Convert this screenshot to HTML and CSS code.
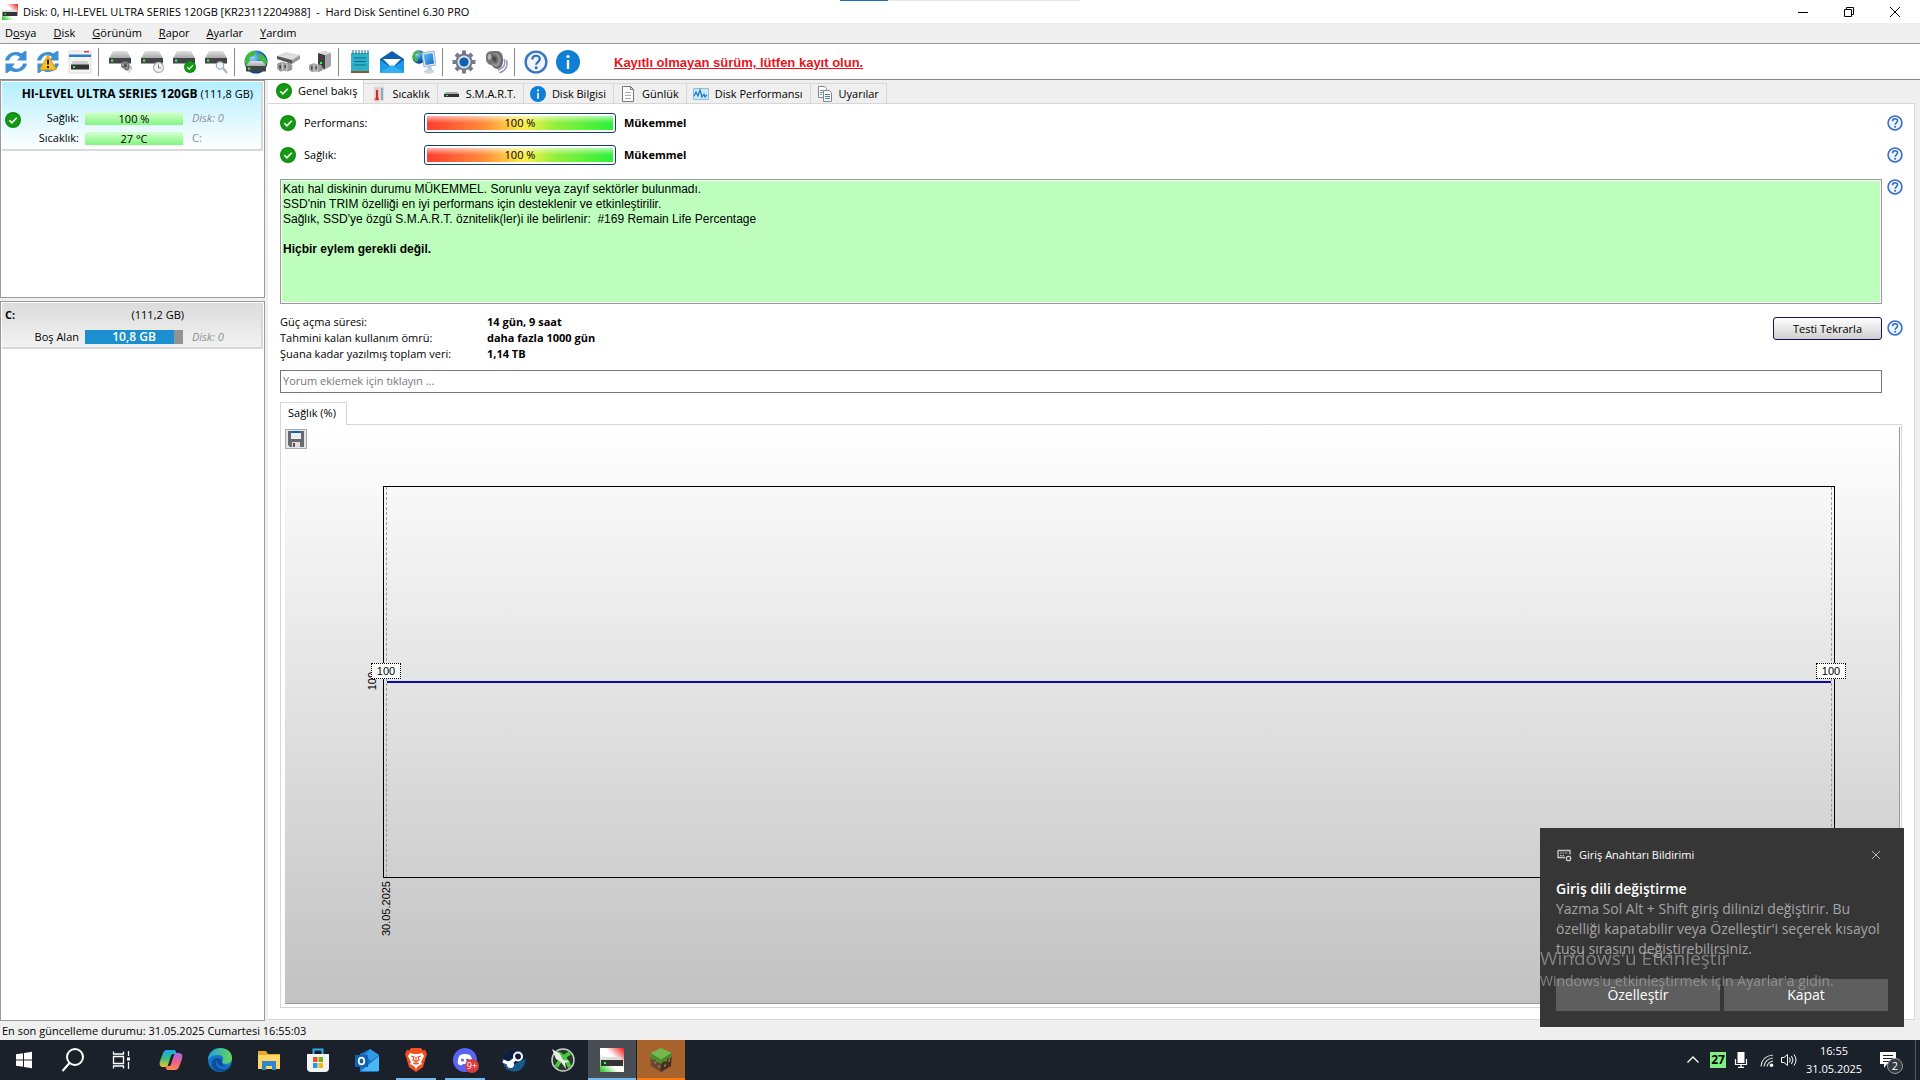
FILE: index.html
```html
<!DOCTYPE html>
<html lang="tr">
  <head>
    <meta charset="utf-8">
    <title>Hard Disk Sentinel 6.30 PRO</title>
    <link rel="stylesheet" href="styles.css">
  </head>
  <body>
    <svg class="defs" aria-hidden="true">
      <defs>
        <linearGradient id="gray" x1="0" y1="0" x2="0" y2="1"><stop offset="0" stop-color="#e2e2e2"/><stop offset="1" stop-color="#a9a9a9"/></linearGradient>
        <linearGradient id="blue" x1="0" y1="0" x2="1" y2="1"><stop offset="0" stop-color="#5cc8f5"/><stop offset="1" stop-color="#1464c8"/></linearGradient>
        <radialGradient id="globe" cx=".35" cy=".3" r=".8"><stop offset="0" stop-color="#9ad8ff"/><stop offset=".5" stop-color="#1b6fd0"/><stop offset="1" stop-color="#062a78"/></radialGradient>
        <radialGradient id="cone" cx=".4" cy=".4" r=".7"><stop offset="0" stop-color="#333"/><stop offset=".6" stop-color="#999"/><stop offset="1" stop-color="#444"/></radialGradient>
        <linearGradient id="logo" x1="0" y1="1" x2="1" y2="0"><stop offset="0" stop-color="#18c818"/><stop offset=".4" stop-color="#fff"/><stop offset=".6" stop-color="#fff"/><stop offset="1" stop-color="#f01818"/></linearGradient>
      </defs>
      <symbol id="i-ok" viewBox="0 0 16 16"><circle cx="8" cy="8" r="8" fill="#0b8a0b"/><circle cx="8" cy="8" r="6.8" fill="#129a12"/><path d="M4.3 8.2l2.6 2.6 4.9-5" fill="none" stroke="#fff" stroke-width="1.6"/></symbol>
      <symbol id="i-help" viewBox="0 0 24 24"><circle cx="12" cy="12" r="10.4" fill="#eef5ff" stroke="#3a73c4" stroke-width="2.4"/><path d="M8.4 9.4c0-5 7.4-4.600 7.400-.4 0 2.800-3.600 2.800-3.600 5.800" fill="none" stroke="#2f6cc0" stroke-width="2.200"/><circle cx="12.200" cy="17.800" r="1.500" fill="#2f6cc0"/></symbol>
      <symbol id="i-info" viewBox="0 0 24 24"><circle cx="12" cy="12" r="12" fill="#0f7fd6"/><circle cx="12" cy="6.500" r="1.600" fill="#fff"/><path d="M12 10v9" stroke="#fff" stroke-width="2.400"/></symbol>
      <symbol id="i-refresh" viewBox="0 0 24 24"><g fill="#3d8fd6"><path d="M1 10.500C2 4 10-.5 17.500 3.500L20.500 1.200 22.500 1v9.500h-9.500l3-3.500C11 3.500 6.500 5.500 5 10.500z"/><path d="M23 13.500c-1 6.500-9 11-16.500 7l-3 2.300-2 .2v-9.500h9.500l-3 3.500c5 3.500 9.500 1.500 11-3.500z"/></g></symbol>
      <symbol id="i-drive" viewBox="0 0 24 24"><path d="M5 1h14l4 7H1z" fill="url(#gray)"/><path d="M1 8h22v5.500H1z" fill="#424547"/><path d="M3 9.500h2.200v2.200H3z" fill="#3ff04a"/></symbol>
      <symbol id="i-speaker" viewBox="0 0 24 24"><path d="M2 5Q3 1 8 1h6q5 1 5 8 0 9-5 10-4 0-6-4-5 0-6-5z" fill="#7b7b7b"/><ellipse cx="12" cy="10" rx="6" ry="8" transform="rotate(-20 12 10)" fill="url(#cone)" stroke="#666"/><ellipse cx="5.500" cy="7" rx="2.500" ry="3.500" fill="#b5b5b5" stroke="#666"/><path d="M20 9c2 5 0 9-6 11M22.500 10c2 7-2 11-7 13" fill="none" stroke="#9c97bb" stroke-width="1.500"/></symbol>
      <symbol id="i-globe" viewBox="0 0 24 24"><circle cx="12" cy="12" r="11.500" fill="url(#globe)"/><path d="M3 5c3-4 7-5 9-3l-2 4-4 1-1 4 4 2 1 5-3 3C1 17-1 11 3 5zM15 3c5 2 8 5 8 10l-3 5-3-3 1-4-4-2z" fill="#43ba3c"/></symbol>
      <symbol id="i-logo" viewBox="0 0 24 24"><path d="M0 0h24v24H0z" fill="url(#logo)"/><path d="M4 9h16l3 3H1z" fill="#ddd"/><path d="M1 12h22v6H1z" fill="#333"/><path d="M4 14h2v2H4z" fill="#3f4"/></symbol>
      <symbol id="i-plug" viewBox="0 0 24 24"><path d="M2 14l6-2 4 2 4-1 3 3v5l-5 2-4-1-5 1-3-3z" fill="#9c9c9c" stroke="#777" stroke-width=".6"/><path d="M8 12v10M13 14v9" stroke="#ddd"/><path d="M4 16h2v4H4zM10 16h2v3h-2z" fill="#444"/></symbol>
    </svg>

    <div class="window">
      <header class="titlebar">
        <svg class="title-icon"><use href="#i-logo"/></svg>
        <h1 class="title">Disk: 0, HI-LEVEL ULTRA SERIES 120GB [KR23112204988]&nbsp; -&nbsp; Hard Disk Sentinel 6.30 PRO</h1>
        <div class="top-progress"><span></span></div>
        <div class="win-buttons">
          <button aria-label="Simge durumuna küçült"><svg viewBox="0 0 12 12"><path d="M1 6.500h10" stroke="#000"/></svg></button>
          <button aria-label="Geri yükle"><svg viewBox="0 0 12 12"><path d="M1.500 3.500h7v7h-7zM3.500 3.500v-2h7v7h-2" fill="none" stroke="#000"/></svg></button>
          <button aria-label="Pencereyi kapat"><svg viewBox="0 0 12 12"><path d="M1 1l10 10M11 1L1 11" stroke="#000"/></svg></button>
        </div>
      </header>

      <nav class="menu">
        <button>D<u>o</u>sya</button>
        <button><u>D</u>isk</button>
        <button><u>G</u>örünüm</button>
        <button><u>R</u>apor</button>
        <button><u>A</u>yarlar</button>
        <button><u>Y</u>ardım</button>
      </nav>

      <div class="toolbar">
        <button aria-label="Yenile"><svg><use href="#i-refresh"/></svg></button>
        <button aria-label="Uyarıları yenile"><svg viewBox="0 0 24 24"><use href="#i-refresh"/><path d="M12 5.500l8 14H4z" fill="#fbc02d" stroke="#e9a80c" stroke-width="1.500" stroke-linejoin="round"/><path d="M12 9.500v5M12 16v2.200" stroke="#222" stroke-width="2"/></svg></button>
        <button aria-label="Pencere"><svg viewBox="0 0 24 24"><path d="M1 1h22v22H1z" fill="#f3f3f3" stroke="#ddd"/><path d="M1 4.500h22v2.500H1z" fill="#2a7fd0"/><path d="M16 1h5v1.500h-5z" fill="#d43a50"/><path d="M5 11h14l2 4H3z" fill="#ccc"/><path d="M3 14.500h18v5H3z" fill="#303234"/><path d="M5 16h2v2H5z" fill="#3ff04a"/></svg></button>
        <i class="sep"></i>
        <button aria-label="Ses testi"><svg viewBox="0 0 24 24"><use href="#i-drive"/><use href="#i-speaker" x="12" y="11" width="12" height="12"/></svg></button>
        <button aria-label="Zamanlanmış test"><svg viewBox="0 0 24 24"><use href="#i-drive"/><circle cx="18.500" cy="17.500" r="5" fill="#f2f2f2" stroke="#b5b5b5" stroke-width="1.300"/><path d="M18.500 14.500v3.500h2.500" fill="none" stroke="#777"/></svg></button>
        <button aria-label="Test"><svg viewBox="0 0 24 24"><use href="#i-drive"/><use href="#i-ok" x="12" y="11" width="12" height="12"/></svg></button>
        <button aria-label="Yüzey testi"><svg viewBox="0 0 24 24"><use href="#i-drive"/><circle cx="16" cy="15.500" r="3.700" fill="#eaf5ff" stroke="#aaa" stroke-width="1.200"/><path d="M19 18l4 5" stroke="#b4b4b4" stroke-width="2.200"/></svg></button>
        <i class="sep"></i>
        <button aria-label="Çevrimiçi disk"><svg viewBox="0 0 24 24"><use href="#i-globe"/><path d="M6 11h12l4 5H2z" fill="url(#gray)"/><path d="M2 16h20v5.500H2z" fill="#424547"/><path d="M4 17.500h2.200v2.200H4z" fill="#3ff04a"/></svg></button>
        <button aria-label="Bağlantı"><svg viewBox="0 0 24 24"><path d="M1 6l9-4 14 3-8 5z" fill="#dcdcdc"/><path d="M1 6l15 4v4L1 9z" fill="#555"/><path d="M16 10l8-5v4l-8 5z" fill="#999"/><use href="#i-plug" y="2" width="20" height="20"/></svg></button>
        <button aria-label="Donanım"><svg viewBox="0 0 24 24"><path d="M10 3l6-2 7 2v13l-7 4-6-3z" fill="#a4a4a4"/><path d="M10 3l7 2v14l-7-3z" fill="#3b3d3f"/><path d="M10 3l6-2 7 2-6 2z" fill="#ddd"/><path d="M12 12h2v2h-2z" fill="#3f4"/><use href="#i-plug" y="4" width="18" height="19"/></svg></button>
        <i class="sep"></i>
        <button aria-label="Rapor"><svg viewBox="0 0 24 24"><path d="M3 3h18v18H3z" fill="#2fb0cb"/><path d="M3 21h18v2H3z" fill="#8a5a25"/><path d="M5 0v4M8 0v4M11 0v4M14 0v4M17 0v4M20 0v4" stroke="#0e647a"/><path d="M6 8h12M6 11.500h12M6 15h12" stroke="#0f6f88" stroke-width="1.200"/></svg></button>
        <button aria-label="E-posta"><svg viewBox="0 0 24 24"><path d="M0 9L12 1l12 8v14H0z" fill="#0f5fae"/><path d="M3 9h18l-9 9z" fill="#fff"/><path d="M0 10l12 8 12-8v13H0z" fill="#1c9be6"/><path d="M0 23l12-8 12 8z" fill="#34b1f2"/></svg></button>
        <button aria-label="Ağ durumu"><svg viewBox="0 0 24 24"><use href="#i-globe" width="14" height="14"/><path d="M10 3l12-2 2 14-12 2z" fill="#dfe8f3" stroke="#9db4cf"/><path d="M11.500 4.500l9-1.500 1.500 10.500-8.500 1.500z" fill="url(#blue)"/><path d="M15 16l4-1 1 5-4 1z" fill="#b9c7d8"/><ellipse cx="17" cy="21.500" rx="5" ry="2" fill="#c9d4e2"/></svg></button>
        <i class="sep"></i>
        <button aria-label="Yapılandırma"><svg viewBox="0 0 24 24"><circle cx="12" cy="12" r="8.500" fill="#727d89"/><path d="M12 .5v23M.5 12h23M4 4l16 16M20 4L4 20" stroke="#727d89" stroke-width="4"/><circle cx="12" cy="12" r="6.500" fill="#d8e3ee"/><circle cx="12" cy="12" r="4.600" fill="#0d5fb4"/></svg></button>
        <button aria-label="Sesler"><svg><use href="#i-speaker"/></svg></button>
        <i class="sep"></i>
        <button aria-label="Yardım"><svg><use href="#i-help"/></svg></button>
        <button aria-label="Hakkında"><svg><use href="#i-info"/></svg></button>
        <a class="register" href="#">Kayıtlı olmayan sürüm, lütfen kayıt olun.</a>
      </div>

      <div class="workspace">
        <aside class="sidebar">
          <section class="disk-list">
            <div class="card card-disk">
              <div class="card-title"><b>HI-LEVEL ULTRA SERIES 120GB</b> (111,8 GB)</div>
              <svg class="ok card-ok"><use href="#i-ok"/></svg>
              <div class="card-row"><span class="key">Sağlık:</span><span class="meter">100 %</span><em>Disk: 0</em></div>
              <div class="card-row"><span class="key">Sıcaklık:</span><span class="meter">27 °C</span><span class="drive">C:</span></div>
            </div>
          </section>
          <section class="volume-list">
            <div class="card card-volume">
              <div class="volume-title"><b>C:</b><span>(111,2 GB)</span></div>
              <div class="card-row"><span class="key">Boş Alan</span><span class="meter meter-used">10,8 GB</span><em>Disk: 0</em></div>
            </div>
          </section>
        </aside>

        <main class="main">
          <div class="tabs" role="tablist">
            <button class="tab active" role="tab" aria-selected="true"><svg><use href="#i-ok"/></svg>Genel bakış</button>
            <button class="tab" role="tab"><svg viewBox="0 0 16 16"><path d="M4 1l10-1v15H4z" fill="#d5dbe0"/><path d="M11 2h2v12h-2z" fill="#9aa7b2"/><path d="M5 2h4v8l1 3-2 3H5l-2-2 2-4z" fill="#e9c6c0"/><path d="M6 4h2v7l1 3H5l1-3z" fill="#d8281e"/></svg>Sıcaklık</button>
            <button class="tab" role="tab"><svg viewBox="0 0 16 16"><path d="M2 6h11l2 2H0z" fill="#aaa"/><path d="M0 8h15v3H0z" fill="#333"/><path d="M2 9h2v1H2z" fill="#3f4"/></svg>S.M.A.R.T.</button>
            <button class="tab" role="tab"><svg><use href="#i-info"/></svg>Disk Bilgisi</button>
            <button class="tab" role="tab"><svg viewBox="0 0 16 16"><path d="M2.500.5h8l3 3v12h-11z" fill="#fff" stroke="#777"/><path d="M10.500.5v3h3" fill="none" stroke="#777"/><path d="M5 6.500h6M5 9.500h6M5 12.500h6" stroke="#aaa"/></svg>Günlük</button>
            <button class="tab" role="tab"><svg viewBox="0 0 16 16"><path d="M.5 2.500h15v11H.5z" fill="#c9e8fa" stroke="#94bcd4"/><path d="M1 10l2-4 2 4 2-6 2 7 2-3 1 3 2-2" fill="none" stroke="#1b75c0" stroke-width="1.200"/></svg>Disk Performansı</button>
            <button class="tab" role="tab"><svg viewBox="0 0 16 16"><path d="M1.500.5h6l2 2v9h-8z" fill="#fff" stroke="#888"/><path d="M3 4.500h4M3 6.500h4M3 8.500h2" stroke="#6a93c0"/><path d="M6.500 4.500h6l2 2v9h-8z" fill="#fff" stroke="#888"/><path d="M8 8.500h5M8 10.500h5M8 12.500h5" stroke="#3f7fc8"/></svg>Uyarılar</button>
          </div>

          <div class="page">
            <div class="line">
              <svg class="ok"><use href="#i-ok"/></svg>
              <span class="line-name">Performans:</span>
              <div class="gauge"><span>100 %</span></div>
              <b class="grow">Mükemmel</b>
              <button class="help" aria-label="Yardım"><svg><use href="#i-help"/></svg></button>
            </div>
            <div class="line">
              <svg class="ok"><use href="#i-ok"/></svg>
              <span class="line-name">Sağlık:</span>
              <div class="gauge"><span>100 %</span></div>
              <b class="grow">Mükemmel</b>
              <button class="help" aria-label="Yardım"><svg><use href="#i-help"/></svg></button>
            </div>

            <div class="status-row">
              <div class="status-text">
                <p>Katı hal diskinin durumu MÜKEMMEL. Sorunlu veya zayıf sektörler bulunmadı.</p>
                <p>SSD'nin TRIM özelliği en iyi performans için desteklenir ve etkinleştirilir.</p>
                <p>Sağlık, SSD'ye özgü S.M.A.R.T. öznitelik(ler)i ile belirlenir:&nbsp; #169 Remain Life Percentage</p>
                <p class="action">Hiçbir eylem gerekli değil.</p>
              </div>
              <button class="help" aria-label="Yardım"><svg><use href="#i-help"/></svg></button>
            </div>

            <div class="facts-row">
              <dl class="facts">
                <dt>Güç açma süresi:</dt><dd>14 gün, 9 saat</dd>
                <dt>Tahmini kalan kullanım ömrü:</dt><dd>daha fazla 1000 gün</dd>
                <dt>Şuana kadar yazılmış toplam veri:</dt><dd>1,14 TB</dd>
              </dl>
              <button class="test-button">Testi Tekrarla</button>
              <button class="help" aria-label="Yardım"><svg><use href="#i-help"/></svg></button>
            </div>

            <input class="comment" type="text" aria-label="Yorum" placeholder="Yorum eklemek için tıklayın ...">

            <div class="chart-tabs"><button class="chart-tab">Sağlık (%)</button></div>
            <div class="chart-frame">
              <div class="chart">
                <button class="save" aria-label="Kaydet"><svg viewBox="0 0 16 16"><path d="M0 0h16v16H2l-2-2z" fill="#666b70"/><path d="M3 0h10v8H3z" fill="#eee"/><path d="M3 0h10v2H3z" fill="#1266b0"/><path d="M4 11h8v5H4z" fill="#ddd"/><path d="M5 12h2v4H5z" fill="#555"/></svg></button>
                <div class="plot">
                  <div class="series"></div>
                  <span class="y-label">100</span>
                  <span class="point point-first">100</span>
                  <span class="point point-last">100</span>
                  <span class="x-label">30.05.2025</span>
                </div>
              </div>
            </div>
          </div>
        </main>
      </div>

      <footer class="statusbar">En son güncelleme durumu: 31.05.2025 Cumartesi 16:55:03</footer>
    </div>

    <div class="taskbar">
      <button class="task" aria-label="Başlat"><svg viewBox="0 0 24 24"><path d="M4 6.200l7-1v6.300H4zM12 5l8-1.200v7.700h-8zM4 12.500h7v6.300l-7-1zM12 12.500h8v7.700L12 19z" fill="#fff"/></svg></button>
      <button class="task" aria-label="Ara"><svg viewBox="0 0 24 24"><circle cx="14" cy="9" r="8" fill="none" stroke="#fff" stroke-width="2"/><path d="M8.500 15L1.500 23" stroke="#fff" stroke-width="2"/></svg></button>
      <button class="task" aria-label="Görev görünümü"><svg viewBox="0 0 24 24"><path d="M3.500 8.500h10v7h-10zM3.500 3.500v2.500h10V3.500M3.500 20.500V18h10v2.500M18.500 3v5M18.500 14v7" fill="none" stroke="#fff" stroke-width="1.300"/><path d="M17 9.500h3v3h-3z" fill="#fff"/></svg></button>
      <button class="task" aria-label="Copilot"><svg viewBox="0 0 24 24"><defs><linearGradient id="c1" x1="0" y1="0" x2="0" y2="1"><stop offset="0" stop-color="#1ea7f0"/><stop offset=".5" stop-color="#3cba7a"/><stop offset="1" stop-color="#f2c52c"/></linearGradient><linearGradient id="c2" x1="0" y1="0" x2="0" y2="1"><stop offset="0" stop-color="#a566f0"/><stop offset=".5" stop-color="#e8608e"/><stop offset="1" stop-color="#f98a50"/></linearGradient></defs><path d="M16 2l2 4h-4c-2 0-2 2-3 5l-2 6c-1 2-2 2-4 2-4 0-5-2-4-6l3-8c1-2 2-3 4-3z" fill="url(#c1)"/><path d="M8 22l-2-4h4c2 0 2-2 3-5l2-6c1-2 2-2 4-2 4 0 5 2 4 6l-3 8c-1 2-2 3-4 3z" fill="url(#c2)"/></svg></button>
      <button class="task" aria-label="Edge"><svg viewBox="0 0 24 24"><defs><linearGradient id="e1"><stop offset="0" stop-color="#249ee0"/><stop offset="1" stop-color="#62d957"/></linearGradient></defs><circle cx="12" cy="12" r="12" fill="#1474c8"/><path d="M0 12C1-4 24-3 24 10c0 7-9 7-10 4 3-4 0-7-4-7-5 0-9 3-10 5z" fill="url(#e1)"/><path d="M9 12c-4 7 6 13 13 6-3 6-10 7-15 4-6-5-3-12 3-12 2 0 4 1 4 4-1 1 1 4 5 4-6 2-10-1-10-6z" fill="#0d4c98"/></svg></button>
      <button class="task" aria-label="Dosya Gezgini"><svg viewBox="0 0 24 24"><path d="M1 3h8l2 3h12v15H1z" fill="#e7a92c"/><path d="M1 7h22v14H1z" fill="#fcd667"/><path d="M5 13h14v9h-4v-4H9v4H5z" fill="#2f86cf"/></svg></button>
      <button class="task" aria-label="Microsoft Store"><svg viewBox="0 0 24 24"><path d="M7.500 7V1.500h9V7" fill="none" stroke="#32aee8" stroke-width="2"/><path d="M1 6h22v14q0 4-4 4H5q-4 0-4-4z" fill="#f3f3f3"/><path d="M7 9h4.500v5H7z" fill="#e8502c"/><path d="M12.500 9H17v5h-4.500z" fill="#74b51a"/><path d="M7 15h4.500v5H7z" fill="#1c9fe0"/><path d="M12.500 15H17v5h-4.500z" fill="#f5b414"/></svg></button>
      <button class="task" aria-label="Outlook"><svg viewBox="0 0 24 24"><path d="M5 6l10-5 9 6v15q0 2-2 2H5z" fill="#1773c8"/><path d="M24 8v15H6z" fill="#48b8f2"/><path d="M15 1l9 6-8 6-6-6z" fill="#2f9be4"/><path d="M0 7h13v12H0z" fill="#0e60b4"/><ellipse cx="6.500" cy="13" rx="2.800" ry="3.400" fill="none" stroke="#fff" stroke-width="1.700"/></svg></button>
      <button class="task running" aria-label="Brave"><svg viewBox="0 0 24 24"><path d="M7 0h10l2 2.500 2-.5 2 4-1 3-3 10-7 5-7-5-3-10-1-3 2-4 2 .5z" fill="#f2501e"/><path d="M6 5l4 1h4l4-1 2 3-3 6 1 2-4 2-2 3-2-3-4-2 1-2-3-6z" fill="#fff"/><path d="M7 8l3 1-1 3 3 2 3-2-1-3 3-1M9 15l3 1 3-1M12 9v7" fill="none" stroke="#f2501e" stroke-width="1.200"/></svg></button>
      <button class="task running" aria-label="Discord"><svg viewBox="0 0 24 24"><circle cx="12" cy="12" r="12" fill="#5865f2"/><path d="M7 7q5-2 10 0 3 4 2 9-3 2-4 1l-1-1h-4l-1 1q-2 1-4-1-1-5 2-9z" fill="#fff"/><circle cx="9.500" cy="12" r="1.500" fill="#5865f2"/><circle cx="14.500" cy="12" r="1.500" fill="#5865f2"/></svg><span class="badge">9+</span></button>
      <button class="task" aria-label="Steam"><svg viewBox="0 0 24 24"><circle cx="12" cy="12" r="11.500" fill="#175a8c"/><path d="M.5 11C2-3 22-3 23.500 11L12 16z" fill="#101f3d"/><circle cx="16" cy="8.500" r="4" fill="none" stroke="#fff" stroke-width="2"/><path d="M1 13l6 2.500 7-5" fill="none" stroke="#fff" stroke-width="3.500"/><circle cx="8.500" cy="16.500" r="3.500" fill="#fff"/></svg></button>
      <button class="task" aria-label="Oyun"><svg viewBox="0 0 24 24"><circle cx="12" cy="12" r="11" fill="#293b2a" stroke="#c9cfc9" stroke-width="1.500"/><path d="M5 5q7 0 14 14M19 5Q11 9 5 19" fill="none" stroke="#48c83e" stroke-width="4"/><path d="M1 1l8 5 3 6 7 1-5 2 1 6-5-7-5-3z" fill="#eceeec"/></svg></button>
      <button class="task current" aria-label="Hard Disk Sentinel"><svg viewBox="0 0 24 24"><use href="#i-logo"/></svg></button>
      <button class="task game" aria-label="Minecraft"><svg viewBox="0 0 24 24"><path d="M12 0l11 5-11 7L1 5z" fill="#72b84a"/><path d="M1 5l11 7v12L2 18z" fill="#6b4630"/><path d="M23 5l-11 7v12l10-6z" fill="#46301f"/><path d="M1 5l11 7v4l-2-2-2 1-2-4-2 1-3-3zM23 5l-11 7v4l3-3 2 1 2-4 2 1 2-3z" fill="#4c8d30"/><path d="M5 13l2 1v2l-2-1zM9 17l2 1v2l-2-1zM15 17l2-1v2l-2 1zM19 12l2-1v2l-2 1z" fill="#9a7050"/></svg></button>

      <div class="tray">
        <button aria-label="Gizli simgeler"><svg class="s16" viewBox="0 0 16 16"><path d="M2.500 10.500L8 5l5.500 5.500" fill="none" stroke="#fff" stroke-width="1.300"/></svg></button>
        <span class="temp">27</span>
        <button aria-label="Mikrofon"><svg class="s16" viewBox="0 0 16 16"><path d="M4.500 0h7v11h-7z" fill="#fff"/><path d="M2.500 7v5.500h11V7M8 12v3M5 15.300h6" fill="none" stroke="#fff" stroke-width="1.200"/></svg></button>
        <button class="net" aria-label="Ağ"><svg class="s16" viewBox="0 0 16 16"><path d="M2 14.500Q3 4 14 3M5 14.500Q6 7 14 6M8 14.500Q9 10 14 9" fill="none" stroke="#d5d8da" stroke-width="1.200"/><circle cx="12.500" cy="13.200" r="1.800" fill="#fff"/></svg></button>
        <button aria-label="Ses düzeyi"><svg class="s16" viewBox="0 0 16 16"><path d="M.5 5.500H3l3.500-3v11L3 10.500H.500z" fill="none" stroke="#fff"/><path d="M8.500 5.500q1.500 2.500 0 5M10.500 4q3 4 0 8M13 2.500q4 5.500 0 11" fill="none" stroke="#fff"/></svg></button>
        <div class="clock"><span>16:55</span><span>31.05.2025</span></div>
        <button class="notes" aria-label="Bildirimler"><svg viewBox="0 0 18 18"><path d="M1 1h16v12H8l-3 4v-4H1z" fill="#fff"/><path d="M4 4.500h10M4 7.500h10M4 10.500h6" stroke="#1b222b"/></svg><span class="count">2</span></button>
        <i class="show-desktop"></i>
      </div>
    </div>

    <div class="toast" role="alert">
      <div class="toast-head">
        <svg class="s16" viewBox="0 0 16 16"><path d="M2 3.500h12v4M2 3.500v7h7" fill="none" stroke="#ccc" stroke-width="1.300"/><path d="M4 6h8M4 8.500h5" stroke="#ccc" stroke-dasharray="1.500 1"/><circle cx="12.500" cy="11.500" r="2.200" fill="none" stroke="#ccc" stroke-width="1.300"/></svg>
        <span class="grow">Giriş Anahtarı Bildirimi</span>
        <button class="toast-close" aria-label="Bildirimi kapat"><svg viewBox="0 0 12 12"><path d="M1 1l10 10M11 1L1 11" stroke="#bbb" stroke-width="1.200"/></svg></button>
      </div>
      <h2>Giriş dili değiştirme</h2>
      <p>Yazma Sol Alt + Shift giriş dilinizi değiştirir. Bu özelliği kapatabilir veya Özelleştir'i seçerek kısayol tuşu sırasını değiştirebilirsiniz.</p>
      <div class="toast-actions">
        <button>Özelleştir</button>
        <button>Kapat</button>
      </div>
    </div>

    <div class="watermark">
      <div class="watermark-title">Windows'u Etkinleştir</div>
      <div>Windows'u etkinleştirmek için Ayarlar'a gidin.</div>
    </div>
  </body>
</html>
```

FILE: styles.css
```css
* {
  box-sizing: border-box;
}
body {
  margin: 0;
  height: 100vh;
  display: flex;
  flex-direction: column;
  overflow: hidden;
  background: #efefef;
  color: #000;
  font-family: "Open Sans", "Noto Sans", sans-serif;
  font-size: 11px;
  line-height: 16px;
}
button {
  padding: 0;
  border: 0;
  background: none;
  color: inherit;
  font: inherit;
}
svg {
  display: block;
  flex: none;
}
h1,
h2,
p,
dl,
dd {
  margin: 0;
}
.defs {
  position: absolute;
  width: 0;
  height: 0;
}
.grow {
  flex: 1;
}
.s16 {
  width: 16px;
  height: 16px;
}
.window {
  flex: 1;
  min-height: 0;
  display: flex;
  flex-direction: column;
}

/* title, menu, toolbar */
.titlebar {
  position: relative;
  height: 23px;
  display: flex;
  align-items: center;
  padding-left: 2px;
  background: #fff;
}
.title-icon {
  width: 16px;
  height: 16px;
}
.title {
  flex: 1;
  padding-left: 5px;
  font-size: 11px;
  font-weight: 400;
}
.top-progress {
  position: absolute;
  top: 0;
  left: 50%;
  width: 240px;
  height: 1px;
  margin-left: -120px;
  background: #e4e4e4;
}
.top-progress span {
  display: block;
  width: 48px;
  height: 1px;
  background: #1a74b8;
}
.win-buttons {
  display: flex;
  padding-right: 2px;
}
.win-buttons button {
  width: 46px;
  display: flex;
  justify-content: center;
}
.win-buttons svg {
  width: 12px;
  height: 12px;
}
.menu {
  height: 21px;
  display: flex;
  gap: 17px;
  padding: 0 5px;
  border-bottom: 1px solid #999;
}
.toolbar {
  height: 36px;
  display: flex;
  align-items: center;
  background: #fff;
  border-bottom: 1px solid #888;
}
.toolbar button {
  width: 32px;
  display: flex;
  justify-content: center;
}
.toolbar svg {
  width: 24px;
  height: 24px;
}
.sep {
  width: 1px;
  height: 28px;
  margin: 0 5px 0 2px;
  background: #888;
}
.register {
  padding: 2px 0 0 30px;
  color: #e8141c;
  font: bold 13px "Liberation Sans", Arial, sans-serif;
}

/* left side */
.workspace {
  flex: 1;
  min-height: 0;
  display: flex;
  gap: 3px;
}
.sidebar {
  width: 265px;
  display: flex;
  flex-direction: column;
  gap: 3px;
}
.disk-list,
.volume-list {
  padding: 1px;
  border: 1px solid #999;
  background: #fff;
}
.disk-list {
  height: 218px;
}
.volume-list {
  flex: 1;
}
.card {
  position: relative;
  border: solid #d8d8d8;
  border-width: 0 2px 2px 0;
}
.card-disk {
  height: 69px;
  padding-top: 4px;
  background: linear-gradient(#b4efff, #fff);
}
.card-volume {
  height: 46px;
  padding-top: 4px;
  background: linear-gradient(#dcdcdc, #f2f2f2);
}
.card-title {
  padding-right: 8px;
  text-align: right;
  margin-bottom: 6px;
}
.card-title b {
  font-size: 12px;
}
.ok {
  width: 16px;
  height: 16px;
}
.card-ok {
  position: absolute;
  left: 3px;
  top: 30px;
}
.card-row {
  display: flex;
  align-items: center;
  gap: 6px;
  height: 20px;
}
.key {
  width: 77px;
  text-align: right;
}
.meter {
  width: 98px;
  height: 13px;
  line-height: 13px;
  text-align: center;
  background: linear-gradient(#d5ffd2, #84f57f);
}
.meter-used {
  height: 14px;
  color: #fff;
  font-size: 12px;
  font-weight: 600;
  background: linear-gradient(90deg, #1c8fd0 91%, #929292 91%);
}
.card-row em,
.drive {
  padding-left: 3px;
  color: #8b9094;
}
.volume-title {
  display: flex;
  justify-content: space-between;
  padding: 0 77px 0 3px;
  margin-bottom: 4px;
}

/* tabs */
.main {
  flex: 1;
  min-width: 0;
  display: flex;
  flex-direction: column;
  padding: 0 5px 1px 0;
}
.tabs {
  height: 23px;
  display: flex;
  align-items: flex-end;
}
.tab {
  height: 20px;
  display: flex;
  align-items: center;
  gap: 6px;
  padding: 0 7px 0 6px;
  border: 1px solid #d6d6d6;
  border-left: 0;
  border-bottom: 0;
}
.tab svg {
  width: 16px;
  height: 16px;
}
.tab.active {
  height: 24px;
  margin-bottom: -1px;
  padding: 0 6px 3px 8px;
  border: 0;
  border-right: 1px solid #d6d6d6;
  background: #fff;
}
.page {
  flex: 1;
  min-height: 0;
  display: flex;
  flex-direction: column;
  padding: 3px 11px 11px 12px;
  border: 1px solid #d6d6d6;
  border-left: 0;
  background: #fff;
}

/* overview */
.line {
  flex: none;
  height: 32px;
  display: flex;
  align-items: center;
  gap: 8px;
}
.line-name {
  width: 112px;
}
.gauge {
  width: 192px;
  height: 20px;
  padding: 2px;
  border: 1px solid #16406b;
  border-radius: 3px;
}
.gauge span {
  display: block;
  height: 14px;
  line-height: 14px;
  text-align: center;
  background: linear-gradient(rgba(255, 255, 255, 0.6), rgba(255, 255, 255, 0) 50%), linear-gradient(90deg, #ff3a30, #ff8a3a 30%, #fdf048 52%, #8df03a 70%, #2cf03c);
}
.help svg {
  width: 16px;
  height: 16px;
}
.status-row {
  display: flex;
  align-items: flex-start;
  gap: 5px;
  margin-top: 8px;
}
.status-text {
  flex: 1;
  height: 125px;
  padding: 2px;
  border: 1px solid #999;
  box-shadow: inset 0 0 0 1px #fff;
  background: #beffbe;
  font: 12px/15px "Liberation Sans", Arial, sans-serif;
}
.action {
  margin-top: 15px;
  font-weight: bold;
}
.facts-row {
  display: flex;
  align-items: center;
  gap: 5px;
  margin: 10px 0 8px;
}
.facts {
  flex: 1;
  display: grid;
  grid-template-columns: 207px auto;
}
.facts dd {
  font-weight: bold;
}
.test-button {
  width: 109px;
  height: 23px;
  align-self: flex-start;
  margin-top: 3px;
  border: 1px solid #14145c;
  border-radius: 3px;
  background: linear-gradient(#fff, #cfcfcf);
}
.facts-row .help {
  align-self: flex-start;
  margin-top: 6px;
}
.comment {
  height: 23px;
  margin-right: 21px;
  padding: 0 2px 2px;
  border: 1px solid #777;
  font: inherit;
}
.comment::placeholder {
  color: #777;
}

/* chart */
.chart-tabs {
  display: flex;
  margin-top: 9px;
}
.chart-tab {
  height: 23px;
  margin-bottom: -1px;
  padding: 0 10px 2px 7px;
  border: 1px solid #d6d6d6;
  border-bottom: 0;
  background: #fff;
  z-index: 1;
}
.chart-frame {
  flex: 1;
  display: flex;
  padding: 2px 1px 3px 4px;
  margin-right: 1px;
  border: 1px solid #d6d6d6;
}
.chart {
  position: relative;
  flex: 1;
  display: flex;
  padding: 59px 64px 125px 98px;
  border: solid #999;
  border-width: 0 1px 1px 0;
  background: linear-gradient(#fff, #c2c2c2);
}
.save {
  position: absolute;
  left: 0;
  top: 2px;
  padding: 1px 2px;
  border: 1px solid #aaa;
  background: #e5e5e5;
}
.save svg {
  width: 16px;
  height: 16px;
}
.plot {
  position: relative;
  flex: 1;
  border: 1px solid #000;
  font: 11px/14px "Liberation Sans", Arial, sans-serif;
}
.series {
  position: absolute;
  inset: 0 2px;
  border: dashed #999;
  border-width: 0 1px;
  background: linear-gradient(#0a0aa8, #0a0aa8) center / 100% 2px no-repeat;
}
.point {
  position: absolute;
  top: 50%;
  width: 30px;
  height: 16px;
  margin-top: -19px;
  border: 1px dotted #000;
  background: #fff;
  text-align: center;
}
.point-first {
  left: -13px;
}
.point-last {
  right: -12px;
}
.y-label,
.x-label {
  position: absolute;
  writing-mode: vertical-rl;
  transform: rotate(180deg);
}
.y-label {
  top: 50%;
  left: -19px;
  margin-top: -10px;
}
.x-label {
  top: 100%;
  left: -5px;
  margin-top: 4px;
}
.statusbar {
  height: 19px;
  padding: 2px 2px 0;
}

/* taskbar */
.taskbar {
  height: 40px;
  display: flex;
  gap: 1px;
  background: #1a212a;
  color: #fff;
}
.task {
  position: relative;
  width: 48px;
  display: flex;
  align-items: center;
  justify-content: center;
  border: solid transparent;
  border-width: 2px 0;
}
.task > svg {
  width: 24px;
  height: 24px;
}
.running {
  border-bottom-color: #76b9ed;
  margin: 0 4px;
  width: 40px;
}
.current {
  background: #484d54;
  border-bottom-color: #76b9ed;
}
.game {
  background: #a8622c;
  border-bottom-color: #ff7a0a;
}
.badge {
  position: absolute;
  left: 20px;
  top: 17px;
  width: 14px;
  height: 14px;
  border-radius: 7px;
  background: #d83c3e;
  font-size: 9px;
  line-height: 14px;
}
.tray {
  margin-left: auto;
  display: flex;
  align-items: center;
}
.temp {
  width: 16px;
  height: 16px;
  margin: 0 7px 0 9px;
  background: #80f080;
  color: #000;
  font-weight: bold;
  font-size: 12px;
  text-align: center;
}
.net {
  margin: 0 6px 0 10px;
}
.clock {
  width: 74px;
  display: flex;
  flex-direction: column;
  text-align: center;
  line-height: 18px;
}
.notes {
  position: relative;
  margin: 0 18px 0 8px;
}
.notes svg {
  width: 18px;
  height: 18px;
}
.count {
  position: absolute;
  left: 8px;
  top: 7px;
  width: 16px;
  height: 16px;
  border: 1px solid #999;
  border-radius: 8px;
  background: #333a42;
  line-height: 14px;
}
.show-desktop {
  width: 5px;
  height: 40px;
  border-left: 1px solid #555b62;
}

/* notification */
.toast {
  position: fixed;
  right: 16px;
  bottom: 53px;
  width: 364px;
  padding: 19px 16px 16px;
  background: #363636;
  color: #fff;
}
.toast-head {
  display: flex;
  align-items: center;
  gap: 7px;
  margin-bottom: 16px;
}
.toast-close {
  padding: 0 7px;
}
.toast-close svg {
  width: 10px;
  height: 10px;
}
.toast h2 {
  font-size: 14px;
  line-height: 20px;
  font-weight: 600;
}
.toast p {
  font-size: 14px;
  line-height: 20px;
  color: #a4a4a4;
}
.toast-actions {
  display: flex;
  gap: 4px;
  margin-top: 20px;
}
.toast-actions button {
  flex: 1;
  height: 32px;
  background: #5e5e5e;
  font-size: 14px;
}
.watermark {
  position: fixed;
  left: calc(100% - 380px);
  bottom: 89px;
  color: rgba(170, 170, 170, 0.65);
  font-size: 14px;
  line-height: 20px;
  white-space: nowrap;
  pointer-events: none;
}
.watermark-title {
  font-size: 19px;
  line-height: 26px;
}
```
